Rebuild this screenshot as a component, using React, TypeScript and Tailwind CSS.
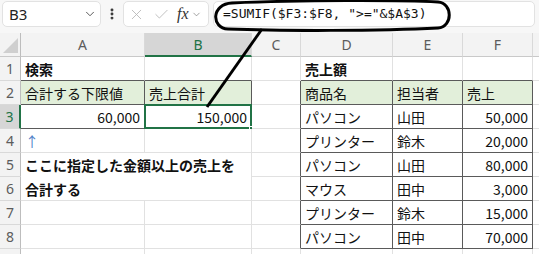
import React from "react";
import { Check, ChevronDown, EllipsisVertical, X } from "lucide-react";

type Cell = {
  text: string;
  bold?: boolean;
  fill?: boolean;
  right?: boolean;
  blue?: boolean;
};

const COLS = ["A", "B", "C", "D", "E", "F", ""];
const ROWS = [1, 2, 3, 4, 5, 6, 7, 8, 9];

const data: Record<string, Cell> = {
  A1: { text: "検索", bold: true },
  D1: { text: "売上額", bold: true },
  A2: { text: "合計する下限値", fill: true },
  B2: { text: "売上合計", fill: true },
  D2: { text: "商品名", fill: true },
  E2: { text: "担当者", fill: true },
  F2: { text: "売上", fill: true },
  A3: { text: "60,000", right: true },
  B3: { text: "150,000", right: true },
  A4: { text: "↑", blue: true },
};

const sales = [
  ["パソコン", "山田", "50,000"],
  ["プリンター", "鈴木", "20,000"],
  ["パソコン", "山田", "80,000"],
  ["マウス", "田中", "3,000"],
  ["プリンター", "鈴木", "15,000"],
  ["パソコン", "田中", "70,000"],
];
sales.forEach((row, i) => {
  data[`D${i + 3}`] = { text: row[0] };
  data[`E${i + 3}`] = { text: row[1] };
  data[`F${i + 3}`] = { text: row[2], right: true };
});

// bordered ranges: A2:B3 and D2:F8
const inTable = (r: number, c: number) =>
  (r >= 2 && r <= 3 && c >= 1 && c <= 2) || (r >= 2 && r <= 8 && c >= 4 && c <= 6);

const font = { fontFamily: "'Noto Sans CJK JP', 'Noto Sans', sans-serif" };

const SheetCell: React.FC<{ r: number; c: number }> = ({ r, c }) => {
  const key = `${COLS[c - 1]}${r}`;
  const cell = data[key];
  const darkRight = inTable(r, c) || inTable(r, c + 1);
  const darkBottom = inTable(r, c) || inTable(r + 1, c);
  const selected = key === "B3";

  return (
    <div
      className={`relative flex items-center border-r border-b px-[4px] text-[14px] leading-none whitespace-nowrap ${
        darkRight ? "border-r-[#5a5a5a]" : "border-r-[#e1e1e1]"
      } ${darkBottom ? "border-b-[#5a5a5a]" : "border-b-[#e1e1e1]"} ${
        cell?.fill ? "bg-[#e2efda]" : "bg-white"
      } ${cell?.right ? "justify-end" : "justify-start"} ${
        cell?.bold ? "font-bold" : "font-normal"
      } ${cell?.blue ? "text-[#4f81c7]" : "text-[#111]"}`}
    >
      <span className="pt-px">{cell?.text}</span>
      {selected && (
        <>
          <div className="absolute -left-px -top-px -right-px -bottom-px border-2 border-[#217346]" />
          <div className="absolute -right-[3px] -bottom-[3px] h-[5px] w-[5px] border border-white bg-[#217346]" />
        </>
      )}
    </div>
  );
};

const ColHeader: React.FC<{ label: string }> = ({ label }) => {
  const sel = label === "B";
  return (
    <div
      className={`flex items-center justify-center border-r border-r-[#d9d9d9] text-[14px] ${
        sel
          ? "bg-[#d6d6d6] text-[#217346] border-b-2 border-b-[#217346]"
          : "bg-[#f3f3f3] text-[#5c5c5c] border-b border-b-[#c9c9c9]"
      }`}
      style={{ fontFamily: "'Noto Sans', sans-serif" }}
    >
      {label}
    </div>
  );
};

const RowHeader: React.FC<{ r: number }> = ({ r }) => {
  const sel = r === 3;
  return (
    <div
      className={`flex items-center justify-center border-b border-b-[#d9d9d9] text-[14px] ${
        sel
          ? "bg-[#d6d6d6] text-[#217346] border-r-2 border-r-[#217346]"
          : "bg-[#f3f3f3] text-[#5c5c5c] border-r border-r-[#bdbdbd]"
      }`}
      style={{ fontFamily: "'Noto Sans', sans-serif" }}
    >
      {r <= 8 ? r : ""}
    </div>
  );
};

export default function App() {
  const cells: React.ReactNode[] = [];

  ROWS.forEach((r) => {
    cells.push(<RowHeader key={`h${r}`} r={r} />);
    COLS.forEach((_, i) => {
      const c = i + 1;
      // merged A5:B6
      if (r === 5 && c === 1) {
        cells.push(
          <div
            key="merged"
            className="col-span-2 row-span-2 flex flex-col justify-center border-r border-b border-r-[#e1e1e1] border-b-[#e1e1e1] bg-white px-[4px] text-[14px] font-bold leading-[24px] text-[#111]"
          >
            <span>ここに指定した金額以上の売上を</span>
            <span>合計する</span>
          </div>
        );
        return;
      }
      if ((r === 5 && c === 2) || (r === 6 && (c === 1 || c === 2))) return;
      cells.push(<SheetCell key={`${r}-${c}`} r={r} c={c} />);
    });
  });

  return (
    <div className="relative h-[254px] w-[539px] overflow-hidden bg-white" style={font}>
      {/* toolbar */}
      <div className="flex h-[33px] items-start bg-[#f7f7f7] pt-px">
        <div className="ml-[2px] flex h-[26px] w-[99px] items-center justify-between rounded-[5px] border border-[#e2e2e2] bg-white pl-[6px] pr-[3px]">
          <span className="text-[15px] text-[#222]" style={{ fontFamily: "'Noto Sans', sans-serif" }}>
            B3
          </span>
          <ChevronDown size={14} strokeWidth={1.5} className="text-[#444]" />
        </div>
        <div className="flex h-[26px] w-[22px] items-center justify-center">
          <EllipsisVertical size={14} strokeWidth={3} className="text-[#333]" />
        </div>
        <div className="flex h-[26px] w-[86px] items-center rounded-[5px] border border-[#e2e2e2] bg-white pl-[4px]">
          <X size={17} strokeWidth={1.2} className="text-[#b5b5b5]" />
          <Check size={17} strokeWidth={1.2} className="ml-[8px] text-[#b5b5b5]" />
          <span
            className="ml-[7px] text-[16px] italic text-[#333]"
            style={{ fontFamily: "'Liberation Serif', serif" }}
          >
            fx
          </span>
          <ChevronDown size={11} strokeWidth={1.5} className="ml-[2px] text-[#777]" />
        </div>
        <div className="ml-[4px] mr-[4px] flex h-[26px] flex-1 items-center rounded-[5px] border border-[#e2e2e2] bg-white pl-[9px]">
          <span className="text-[13px] text-[#111]" style={{ fontFamily: "'DejaVu Sans Mono', monospace" }}>
            =SUMIF($F3:$F8, "&gt;="&amp;$A$3)
          </span>
        </div>
      </div>

      {/* sheet */}
      <div className="grid grid-cols-[21px_124px_107px_49px_92px_70px_70px_1fr] grid-rows-[24px] auto-rows-[24px]">
        <div className="relative border-r border-b border-r-[#bdbdbd] border-b-[#c9c9c9] bg-[#f3f3f3]">
          <svg className="absolute bottom-[3px] right-[2px]" width="15" height="15" viewBox="0 0 15 15">
            <polygon points="15,0 15,15 0,15" fill="#cfcfcf" />
          </svg>
        </div>
        {COLS.map((l, i) => (
          <ColHeader key={`c${i}`} label={l} />
        ))}
        {cells}
      </div>

      {/* annotation */}
      <svg className="pointer-events-none absolute left-0 top-0" width="539" height="254" viewBox="0 0 539 254">
        <path
          d="M232 3 C300 0 400 0 438 2 C453 3 453 27 438 28 C380 31 280 31 228 29 C211 28 211 4 232 3 Z"
          fill="none"
          stroke="#000"
          strokeWidth="3"
        />
        <line x1="262" y1="29" x2="207" y2="107" stroke="#000" strokeWidth="3" />
      </svg>
    </div>
  );
}
